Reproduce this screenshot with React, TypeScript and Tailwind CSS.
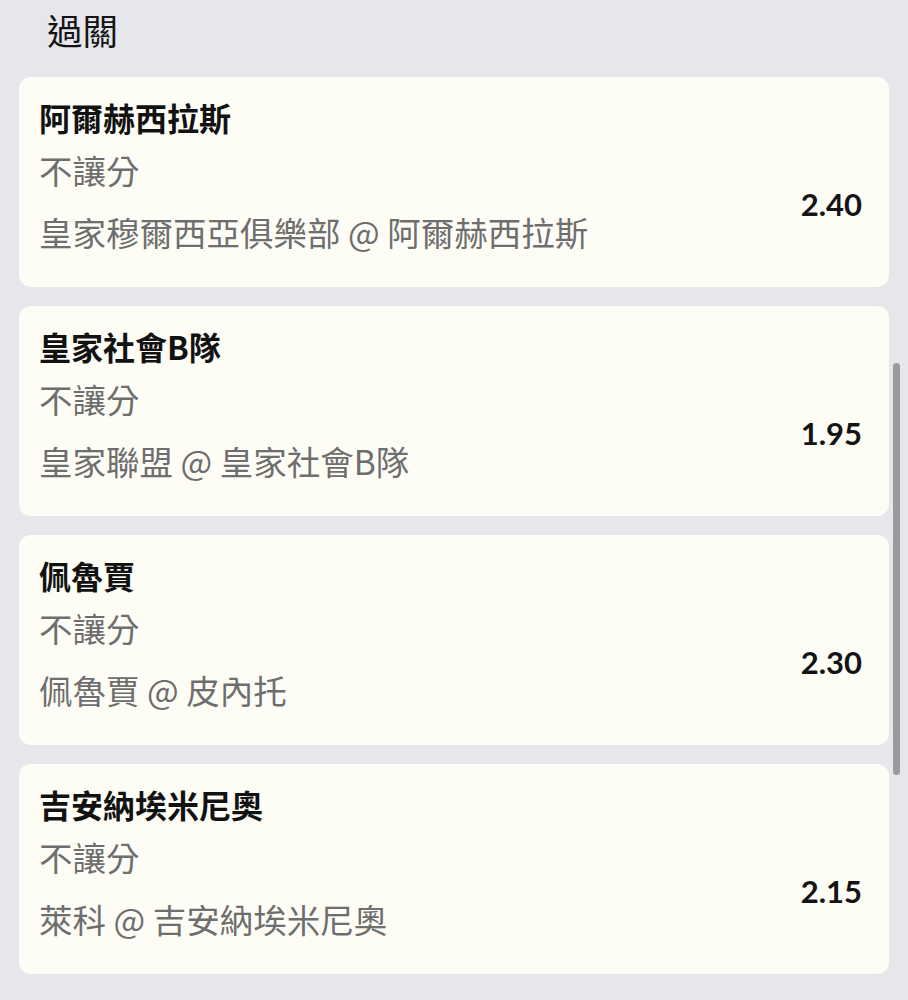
import React from "react";

const items = [
  { title: "阿爾赫西拉斯", sub: "不讓分", match: "皇家穆爾西亞俱樂部 @ 阿爾赫西拉斯", odds: "2.40" },
  { title: "皇家社會B隊", sub: "不讓分", match: "皇家聯盟 @ 皇家社會B隊", odds: "1.95" },
  { title: "佩魯賈", sub: "不讓分", match: "佩魯賈 @ 皮內托", odds: "2.30" },
  { title: "吉安納埃米尼奧", sub: "不讓分", match: "萊科 @ 吉安納埃米尼奧", odds: "2.15" },
];

export default function App() {
  return (
    <div
      className="relative w-[908px] h-[1000px] overflow-hidden bg-[#e6e7eb]"
      style={{ fontFamily: '"Noto Sans CJK TC", "Noto Sans", sans-serif' }}
    >
      <div className="h-[77px] pl-[47px] pt-[6px] text-[35.5px] leading-[48px] text-[#141414]">過關</div>
      <div className="flex flex-col gap-[19px] px-[19px]">
        {items.map((it) => (
          <div
            key={it.title}
            className="h-[210px] rounded-[12px] bg-[#fdfdf5] pl-[20px] pr-[27px] flex items-start justify-between"
          >
            <div className="flex flex-col pt-[18px]">
              <div className="text-[32px] leading-[44px] font-bold text-[#121212]">{it.title}</div>
              <div className="mt-[9px] text-[33.5px] leading-[44px] text-[#6e6e6e]">{it.sub}</div>
              <div className="mt-[18px] text-[33.5px] leading-[44px] text-[#6e6e6e]">{it.match}</div>
            </div>
            <div
              className="mt-[112px] text-[31px] font-bold text-[#141414] leading-none"
              style={{ fontFamily: 'Lato, "Noto Sans", sans-serif' }}
            >
              {it.odds}
            </div>
          </div>
        ))}
      </div>
      <div className="absolute left-[893px] top-[363px] w-[7px] h-[412px] rounded-full bg-[#9a9a9c]" />
    </div>
  );
}
